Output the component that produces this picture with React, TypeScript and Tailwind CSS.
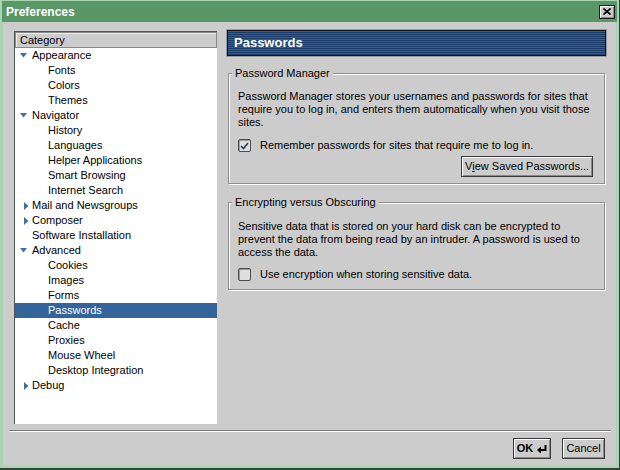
import React from 'react';

type Node = { label: string; level: 0 | 1; toggle?: 'open' | 'closed'; selected?: boolean };

const tree: Node[] = [
  { label: 'Appearance', level: 0, toggle: 'open' },
  { label: 'Fonts', level: 1 },
  { label: 'Colors', level: 1 },
  { label: 'Themes', level: 1 },
  { label: 'Navigator', level: 0, toggle: 'open' },
  { label: 'History', level: 1 },
  { label: 'Languages', level: 1 },
  { label: 'Helper Applications', level: 1 },
  { label: 'Smart Browsing', level: 1 },
  { label: 'Internet Search', level: 1 },
  { label: 'Mail and Newsgroups', level: 0, toggle: 'closed' },
  { label: 'Composer', level: 0, toggle: 'closed' },
  { label: 'Software Installation', level: 0 },
  { label: 'Advanced', level: 0, toggle: 'open' },
  { label: 'Cookies', level: 1 },
  { label: 'Images', level: 1 },
  { label: 'Forms', level: 1 },
  { label: 'Passwords', level: 1, selected: true },
  { label: 'Cache', level: 1 },
  { label: 'Proxies', level: 1 },
  { label: 'Mouse Wheel', level: 1 },
  { label: 'Desktop Integration', level: 1 },
  { label: 'Debug', level: 0, toggle: 'closed' },
];

const Twisty: React.FC<{ kind?: 'open' | 'closed' }> = ({ kind }) => {
  if (kind === 'open')
    return (
      <svg width="7" height="5" viewBox="0 0 7 5" className="block">
        <polygon points="0,0 7,0 3.5,4.5" fill="#3f70a8" />
      </svg>
    );
  if (kind === 'closed')
    return (
      <svg width="5" height="8" viewBox="0 0 5 8" className="block ml-[4px]">
        <polygon points="0,0 4.5,4 0,8" fill="#3f70a8" />
      </svg>
    );
  return null;
};

const Checkbox: React.FC<{ checked?: boolean }> = ({ checked }) => (
  <span className="flex items-center justify-center w-[13px] h-[13px] shrink-0 rounded-[2px] border border-[#4d4d4d] bg-[#dedede] shadow-[inset_1px_1px_0_#9a9a9a]">
    {checked && (
      <svg width="9" height="8" viewBox="0 0 9 8">
        <path d="M1 4 L3.5 6.5 L8 1" stroke="#2c3a5a" strokeWidth="1.6" fill="none" />
      </svg>
    )}
  </span>
);

const Button: React.FC<{ className?: string; children: React.ReactNode }> = ({ className = '', children }) => (
  <button
    className={`flex items-center justify-center h-[21px] border border-[#3a3a3a] bg-[#cccccc] shadow-[inset_1px_1px_0_#ffffff,inset_-1px_-1px_0_#8a8a8a] text-[11px] text-black ${className}`}
  >
    {children}
  </button>
);

const App: React.FC = () => {
  return (
    <div className="w-[620px] h-[470px] flex flex-col bg-[#a8d5b0] pt-[1px] px-[3px] pb-[2px] border-r border-b-2 border-[#2e4a34] font-['Liberation_Sans',Arial,sans-serif] text-[11px] text-black select-none">
      {/* title bar */}
      <div className="h-[21px] shrink-0 -mx-[1px] flex items-center justify-between pl-[4px] pr-[2px] bg-[#5a9767]">
        <span className="text-white font-bold text-[12px]">Preferences</span>
        <span className="flex items-center justify-center w-[16px] h-[14px] bg-[#cccccc] border border-[#1f1f1f] shadow-[inset_1px_1px_0_#ffffff,inset_-1px_-1px_0_#8a8a8a]">
          <svg width="8" height="7" viewBox="0 0 8 7">
            <path d="M0.5 0.5 L7.5 6.5 M7.5 0.5 L0.5 6.5" stroke="#000" strokeWidth="1.6" />
          </svg>
        </span>
      </div>

      {/* body */}
      <div className="flex-1 flex flex-col bg-[#cccccc]">
        <div className="flex gap-[10px] pt-[8px] pl-[11px] pr-[10px]">
          {/* category tree */}
          <div className="mt-[1px] w-[203px] h-[393px] shrink-0 flex flex-col bg-white border-t border-l border-[#555555] overflow-hidden">
            <div className="h-[16px] shrink-0 flex items-center pl-[4px] bg-[#cccccc] border border-[#8a8a8a] shadow-[inset_1px_1px_0_#eeeeee] leading-[13px]">
              Category
            </div>
            {tree.map((n) => (
              <div
                key={n.label}
                className={`h-[15px] shrink-0 flex items-center leading-[15px] ${
                  n.selected ? 'bg-[#33659c] text-white' : ''
                } ${n.level === 0 ? 'pl-[5px]' : 'pl-[33px]'}`}
              >
                {n.level === 0 && (
                  <span className="w-[12px] shrink-0 flex items-center">
                    <Twisty kind={n.toggle} />
                  </span>
                )}
                {n.label}
              </div>
            ))}
          </div>

          {/* right pane */}
          <div className="flex-1 flex flex-col">
            <div className="h-[26px] flex items-center pl-[6px] border border-[#141414] bg-[repeating-linear-gradient(to_bottom,#2f5f94_0px,#2f5f94_1px,#1a3c6a_1px,#1a3c6a_2px)] shadow-[0_0_0_1px_#9a9a9a]">
              <span className="text-white font-bold text-[13px]">Passwords</span>
            </div>

            <fieldset className="mt-[11px] ml-[1px] mr-[1px] border border-[#8e8e8e] shadow-[1px_1px_0_#ffffff,inset_1px_1px_0_#ffffff] pl-[9px] pr-[11px] pt-[10px] pb-[6px]">
              <legend className="-ml-[6px] px-[3px] leading-[13px] bg-[#cccccc]">Password Manager</legend>
              <p className="leading-[13px]">
                Password Manager stores your usernames and passwords for sites that
                <br />
                require you to log in, and enters them automatically when you visit those
                <br />
                sites.
              </p>
              <label className="mt-[10px] h-[13px] flex items-center gap-[9px]">
                <Checkbox checked />
                <span>Remember passwords for sites that require me to log in.</span>
              </label>
              <div className="mt-[4px] flex justify-end">
                <Button className="w-[132px]">
                  V<span className="underline">i</span>ew Saved Passwords...
                </Button>
              </div>
            </fieldset>

            <fieldset className="mt-[12px] ml-[1px] mr-[1px] border border-[#8e8e8e] shadow-[1px_1px_0_#ffffff,inset_1px_1px_0_#ffffff] pl-[9px] pr-[11px] pt-[11px] pb-[8px]">
              <legend className="-ml-[6px] px-[3px] leading-[13px] bg-[#cccccc]">Encrypting versus Obscuring</legend>
              <p className="leading-[13px]">
                Sensitive data that is stored on your hard disk can be encrypted to
                <br />
                prevent the data from being read by an intruder. A password is used to
                <br />
                access the data.
              </p>
              <label className="mt-[9px] h-[13px] flex items-center gap-[9px]">
                <Checkbox />
                <span>Use encryption when storing sensitive data.</span>
              </label>
            </fieldset>
          </div>
        </div>

        {/* separator */}
        <div className="mt-[6px] ml-[6px] mr-[5px] h-[2px] border-t border-[#7a7a7a] border-b border-b-white" />

        {/* dialog buttons */}
        <div className="mt-[6px] flex justify-end gap-[11px] pr-[11px]">
          <Button className="w-[38px] font-bold gap-[4px]">
            OK
            <svg width="10" height="8" viewBox="0 0 10 8">
              <path d="M8.5 0 V5 H3" stroke="#000" strokeWidth="2" fill="none" />
              <polygon points="0,5 4,1.5 4,8.5" fill="#000" />
            </svg>
          </Button>
          <Button className="w-[43px]">Cancel</Button>
        </div>
      </div>
    </div>
  );
};

export default App;
